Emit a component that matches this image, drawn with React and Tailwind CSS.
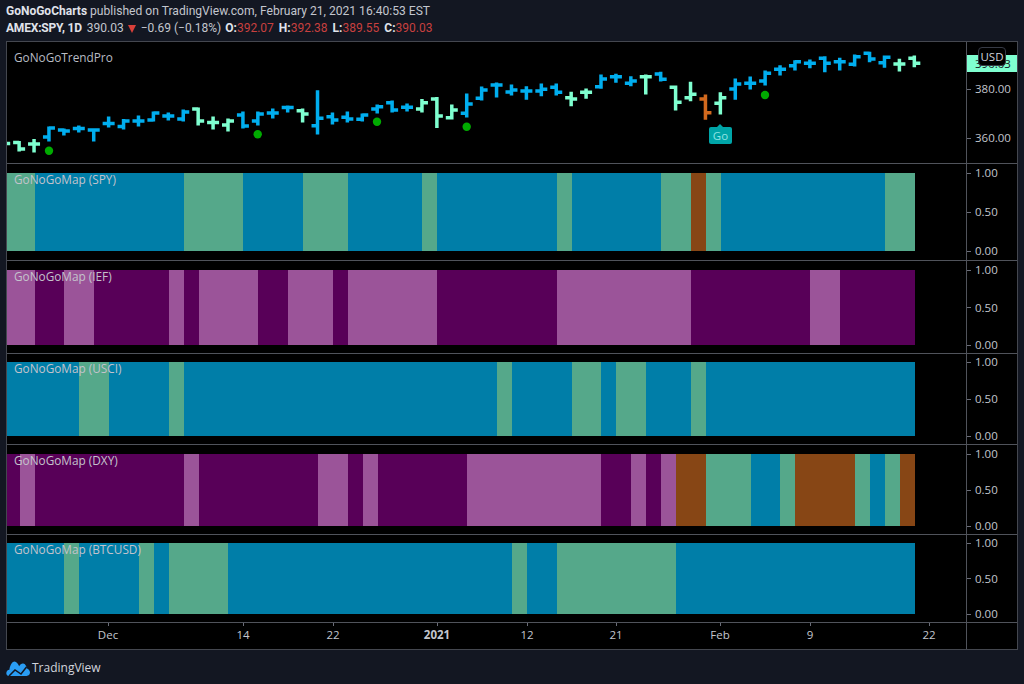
const FONT = "font-['Open_Sans','Noto_Sans',sans-serif]";
const stepX = (i) => 4.2 + 14.92 * i;
const bandX = (i) => stepX(i) + 0.5;

// i is the bar index, x of a bar is stepX(i). [open, high, low, close] in page pixels
const BARS = [
  [143.5, 143.5, 143.5, 143.5, "l"], [142.5, 141.5, 151, 149, "l"], [144, 139.5, 152, 144, "l"],
  [137, 127, 141, 128, "b"], [130, 129, 135, 131, "b"], [128.5, 126, 132, 128.5, "b"], [130, 129, 141, 130, "b"],
  [123.5, 117, 127, 123.5, "b"], [126.5, 119.5, 129, 121, "b"], [121, 116, 126, 121, "b"], [120, 112, 121, 113, "b"],
  [116, 113, 120, 116, "b"], [119, 110, 121, 112, "b"], [109, 108, 125, 121, "l"], [122.5, 117, 129, 122.5, "l"],
  [125, 119, 131, 121, "l"], [115, 112, 128, 126, "b"], [121, 112, 125, 114, "b"], [113, 109, 118, 113, "b"],
  [107.5, 106, 112, 107.5, "b"], [110.7, 109, 122, 114, "l"], [125.7, 90.7, 134, 118.3, "b"], [116.7, 113, 124, 120, "b"],
  [117.3, 112, 122, 119, "b"], [119.3, 114, 121, 115, "b"], [109, 105, 113, 106.7, "b"], [102.7, 101, 112, 110, "b"],
  [107.3, 104, 111, 107.3, "b"], [109, 99.5, 112, 102.7, "l"], [99, 97.5, 127.5, 116, "l"], [117.7, 105, 119, 110, "l"],
  [113.3, 94, 117, 104, "b"], [98.3, 87, 100, 90, "b"], [85, 83, 97, 85, "b"], [92, 85, 95, 90, "b"],
  [91, 86.7, 99.3, 91, "b"], [91, 84, 95.7, 89.3, "b"], [87.3, 84, 95, 92.3, "b"], [97.7, 92.3, 105.7, 99, "l"],
  [92.3, 89, 98.3, 92.3, "l"], [86.7, 75, 88.3, 79, "b"], [76.7, 74.3, 82.3, 76.7, "b"], [83.3, 76.7, 85.7, 81, "b"],
  [76.7, 75, 94, 76.7, "l"], [74, 72.3, 81, 79.3, "b"], [87.3, 86, 110, 102.3, "l"], [97.7, 82.3, 100.7, 94.3, "l"],
  [99, 95, 119.3, 112.7, "o"], [103.3, 92.7, 114, 97.7, "l"], [89, 79, 99.3, 84, "b"], [83.3, 77, 89, 83.3, "b"],
  [81, 71, 85, 73.3, "b"], [69.3, 65.7, 75, 69.3, "b"], [65.7, 60.7, 70, 61.7, "b"], [63.3, 60, 67.7, 63.3, "b"],
  [58.3, 56.7, 71.7, 63.3, "b"], [61.7, 58.3, 70, 61.7, "b"], [64.3, 55, 66, 56.7, "b"], [53.3, 52.3, 61.7, 59, "b"],
  [62.7, 56, 67.3, 57.3, "b"], [64, 59.3, 71, 64, "l"], [58.3, 56, 66.7, 63.3, "l"],
];
const BAR_COLORS = { b: "#00aeef", l: "#7fffd0", o: "#d2691e" };
const DOTS = [[49, 150.7], [257.7, 134.3], [377, 121.7], [466.7, 126.7], [765, 95]];

const BAND_CLASS = {
  b: "bg-[#007ea8]",
  g: "bg-[#55a88a]",
  o: "bg-[#874615]",
  d: "bg-[#580058]",
  p: "bg-[#9b5499]",
};

// each band is [color, index of the bar where it ends]
const PANES = [
  {
    name: "GoNoGoMap (SPY)", h: 96, pt: 9, band: 78,
    bands: [["g", 2], ["b", 12], ["g", 16], ["b", 20], ["g", 23], ["b", 28], ["g", 29], ["b", 37], ["g", 38], ["b", 44], ["g", 46], ["o", 47], ["g", 48], ["b", 59], ["g", 61]],
  },
  {
    name: "GoNoGoMap (IEF)", h: 92, pt: 9, band: 75,
    bands: [["p", 2], ["d", 4], ["p", 6], ["d", 11], ["p", 12], ["d", 13], ["p", 17], ["d", 19], ["p", 22], ["d", 23], ["p", 29], ["d", 37], ["p", 46], ["d", 54], ["p", 56], ["d", 61]],
  },
  {
    name: "GoNoGoMap (USCI)", h: 90, pt: 8, band: 74,
    bands: [["b", 5], ["g", 7], ["b", 11], ["g", 12], ["b", 33], ["g", 34], ["b", 38], ["g", 40], ["b", 41], ["g", 43], ["b", 46], ["g", 47], ["b", 61]],
  },
  {
    name: "GoNoGoMap (DXY)", h: 89, pt: 9, band: 72,
    bands: [["d", 1], ["p", 2], ["d", 12], ["p", 13], ["d", 21], ["p", 23], ["d", 24], ["p", 25], ["d", 31], ["p", 40], ["d", 42], ["p", 43], ["d", 44], ["p", 45], ["o", 47], ["g", 50], ["b", 52], ["g", 53], ["o", 57], ["g", 58], ["b", 59], ["g", 60], ["o", 61]],
  },
  {
    name: "GoNoGoMap (BTCUSD)", h: 87, pt: 8, band: 71,
    bands: [["b", 4], ["g", 5], ["b", 9], ["g", 10], ["b", 11], ["g", 15], ["b", 34], ["g", 35], ["b", 37], ["g", 45], ["b", 61]],
  },
];

const TIME_LABELS = [
  ["Dec", 108], ["14", 243], ["22", 333], ["2021", 437, true], ["12", 527],
  ["21", 616], ["Feb", 720], ["9", 810], ["22", 929],
];

const OHLC = [["O:", "392.07"], ["H:", "392.38"], ["L:", "389.55"], ["C:", "390.03"]];

function AxisRow({ label }) {
  return (
    <div className="flex items-center h-[14px] gap-[4px]">
      <span className="w-[4px] h-px bg-[#6a6d78]" />
      <span className="text-[11.5px] leading-[14px] text-[#c3c6ce]">{label}</span>
    </div>
  );
}

function PriceChart() {
  return (
    <svg viewBox="7 42 959 121" width="959" height="121" className="block">
      {BARS.map(([o, h, l, c, kind], i) => {
        const x = stepX(i);
        return (
          <path
            key={i}
            d={`M${x} ${h - 0.5}V${l + 0.5}M${x - 6} ${o}H${x}M${x} ${c}H${x + 6}`}
            stroke={BAR_COLORS[kind]}
            strokeWidth="3.5"
            fill="none"
          />
        );
      })}
      {DOTS.map(([x, y]) => (
        <circle key={x} cx={x} cy={y} r="4.2" fill="#00ab00" />
      ))}
    </svg>
  );
}

function MapPane({ pane }) {
  let from = 7;
  return (
    <div className="flex border-t border-[#50535b] box-content" style={{ height: pane.h }}>
      <div className="relative w-[959px]" style={{ paddingTop: pane.pt }}>
        <div className="flex" style={{ height: pane.band }}>
          {pane.bands.map(([color, end], i) => {
            const to = bandX(end);
            const width = to - from;
            from = to;
            return <div key={i} className={BAND_CLASS[color]} style={{ width }} />;
          })}
        </div>
        <span className="absolute left-[7px] text-[11.8px] leading-[14px] text-[#c4c3cc]" style={{ top: pane.pt - 1 }}>
          {pane.name}
        </span>
      </div>
      <div className="flex-1 border-l border-[#50535b]" style={{ paddingTop: pane.pt - 7 }}>
        <div className="flex flex-col justify-between" style={{ height: pane.band + 14 }}>
          <AxisRow label="1.00" />
          <AxisRow label="0.50" />
          <AxisRow label="0.00" />
        </div>
      </div>
    </div>
  );
}

function Logo() {
  return (
    <svg width="24" height="15" viewBox="0 0 24 15">
      <path
        d="M0.3 12.2C0.3 10.4 1.6 9 3.4 8.8C4 4 6.5 0.5 8.5 0.5C10.5 0.5 12 3 13.2 5.2C14.2 3.4 15.6 2.4 17.2 2.6C19.4 3 20.4 5 20.6 7.2C22.6 7.8 24 9.6 24 11.6C24 13.4 22.6 15 20.6 15H3C1.4 15 0.3 13.8 0.3 12.2Z"
        fill="#2a9df4"
      />
      <path d="M3 15L9 9L15 13L20.5 6" fill="none" stroke="#131722" strokeWidth="1.5" />
    </svg>
  );
}

export default function App() {
  return (
    <div className={`w-[1024px] h-[684px] overflow-hidden bg-[#131722] ${FONT}`}>
      <header className="h-[41px] pl-[6px] pt-[3px] font-['Roboto',sans-serif] leading-[17px] text-[#c3c6ce] whitespace-nowrap">
        <div className="flex items-baseline gap-[3px] text-[12.1px]">
          <b className="font-bold text-[12px] text-[#e0e3eb]">GoNoGoCharts</b>
          <span>published on TradingView.com, February 21, 2021 16:40:53 EST</span>
        </div>
        <div className="flex items-center gap-[4px] text-[12px]">
          <b className="font-bold tracking-[-0.2px] text-[#e0e3eb]">AMEX:SPY, 1D</b>
          <span className="ml-[1px]">390.03</span>
          <span className="w-0 h-0 border-x-[4px] border-x-transparent border-t-[8px] border-t-[#d9403a]" />
          <span className="ml-[1px]">−0.69 (−0.18%)</span>
          {OHLC.map(([key, value]) => (
            <span key={key} className="flex items-baseline mr-[1px]">
              <b className="font-bold text-[#e0e3eb]">{key}</b>
              <span className="text-[#c8403f]">{value}</span>
            </span>
          ))}
        </div>
      </header>

      <main className="ml-[6px] w-[1012px] border border-[#44474f] bg-black">
        <div className="flex h-[121px]">
          <div className="relative w-[959px]">
            <PriceChart />
            <span className="absolute left-[7px] top-[8px] text-[11.8px] leading-[14px] text-[#b9bcc4]">GoNoGoTrendPro</span>
            <div className="absolute left-[702px] top-[85px] w-[23px] h-[17px] rounded-[2px] bg-[#00a5a8] text-center text-[11.5px] leading-[17px] text-[#8fe3e3]">
              Go
              <span className="absolute left-[8px] top-[-3px] w-0 h-0 border-x-[3.5px] border-x-transparent border-b-[3.5px] border-b-[#00a5a8]" />
            </div>
          </div>
          <div className="relative flex-1 border-l border-[#50535b] pt-[40px]">
            <AxisRow label="380.00" />
            <div className="h-[35px]" />
            <AxisRow label="360.00" />
            <div className="absolute left-0 right-0 top-[13px] h-[17px] bg-[#7fffd0] text-[11.5px] leading-[17px] pl-[8px] text-[#131722]">390.03</div>
            <div className="absolute left-[11px] top-[5px] w-[28px] h-[19px] rounded-[4px] border border-[#363a45] bg-black text-center text-[11.5px] leading-[17px] text-[#d1d4dc]">USD</div>
          </div>
        </div>

        {PANES.map((pane) => (
          <MapPane key={pane.name} pane={pane} />
        ))}

        <div className="flex h-[26px] border-t border-[#50535b] box-content">
          <div className="relative w-[959px]">
            {TIME_LABELS.map(([label, x, bold]) => (
              <div key={label + x} className="absolute top-0 w-[30px] flex flex-col items-center" style={{ left: x - 7 - 15 }}>
                <span className="w-px h-[3px] bg-[#6a6d78]" />
                <span className={`mt-[2px] text-[11.5px] leading-[14px] text-[#c3c6ce] ${bold ? "font-bold" : ""}`}>{label}</span>
              </div>
            ))}
          </div>
          <div className="flex-1 border-l border-[#50535b]" />
        </div>
      </main>

      <footer className="flex items-center gap-[2px] pl-[6px] mt-[10px] text-[12px] leading-[16px] text-[#d1d4dc]">
        <Logo />
        <span>TradingView</span>
      </footer>
    </div>
  );
}
